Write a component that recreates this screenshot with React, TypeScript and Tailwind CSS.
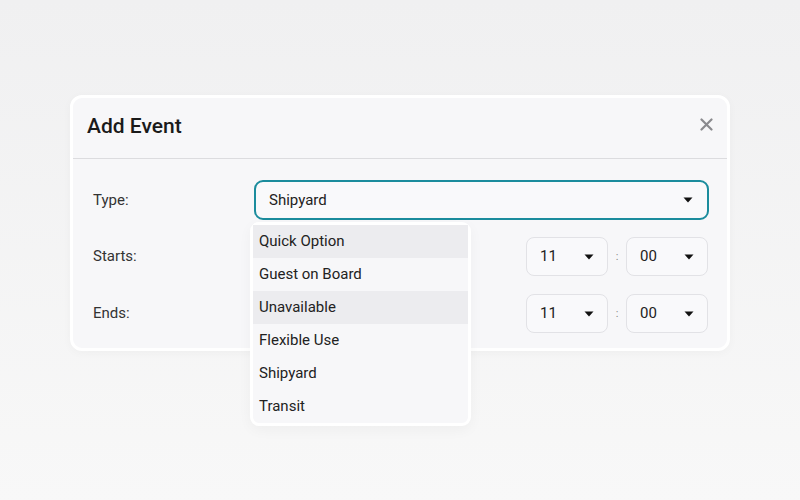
import React from "react";

function Caret() {
  return (
    <svg width="10" height="6" viewBox="0 0 10 6" className="shrink-0">
      <path d="M0.5 0.5 H9.5 L5 5.5 Z" fill="#111" />
    </svg>
  );
}

function TimeSelect({ value }: { value: string }) {
  return (
    <div className="flex h-[39px] w-[82px] items-center justify-between rounded-lg border border-[#e2e2e6] bg-[#f9f9fb] pl-[13px] pr-[13px] text-[15px] text-[#222]">
      <span>{value}</span>
      <Caret />
    </div>
  );
}

function TimeRow() {
  return (
    <div className="flex items-center">
      <TimeSelect value="11" />
      <span className="w-[18px] text-center text-[11px] leading-none text-[#888]">:</span>
      <TimeSelect value="00" />
    </div>
  );
}

const options = [
  { label: "Quick Option", active: true },
  { label: "Guest on Board", active: false },
  { label: "Unavailable", active: true },
  { label: "Flexible Use", active: false },
  { label: "Shipyard", active: false },
  { label: "Transit", active: false },
];

export default function App() {
  return (
    <div
      className="h-[500px] w-[800px] bg-gradient-to-b from-[#f0f0f1] to-[#f8f8f8] pl-[70px] pt-[95px]"
      style={{ fontFamily: "Roboto, 'Noto Sans', sans-serif" }}
    >
      <div className="relative h-[256px] w-[660px] rounded-[12px] border-[3px] border-white bg-[#f7f7f9] shadow-[0_2px_10px_rgba(0,0,0,0.03)]">
        <div className="flex h-[61px] items-center justify-between border-b border-[#dcdcdf] pl-[14px] pr-[14px]">
          <h1 className="pb-[2px] text-[21px] font-medium text-[#1a1a1a]">Add Event</h1>
          <svg width="13" height="13" viewBox="0 0 13 13" className="mb-[7px]">
            <path d="M1.5 1.5 L11.5 11.5 M11.5 1.5 L1.5 11.5" stroke="#8a8a8e" strokeWidth="2.2" strokeLinecap="round" />
          </svg>
        </div>

        <div className="flex flex-col pl-[20px] pr-[19px] pt-[21px]">
          <div className="flex h-[40px] items-center">
            <span className="w-[161px] text-[15px] text-[#333]">Type:</span>
            <div className="mr-[-1px] flex h-[40px] flex-1 items-center justify-between rounded-[9px] border-2 border-[#1b8c9d] bg-[#f9f9fb] pl-[13px] pr-[14px] text-[15px] text-[#222]">
              <span>Shipyard</span>
              <Caret />
            </div>
          </div>

          <div className="mt-[17px] flex h-[39px] items-center justify-between">
            <span className="text-[15px] text-[#333]">Starts:</span>
            <TimeRow />
          </div>

          <div className="mt-[18px] flex h-[39px] items-center justify-between">
            <span className="text-[15px] text-[#333]">Ends:</span>
            <TimeRow />
          </div>
        </div>

        <div className="absolute left-[177px] top-[124px] w-[221px] rounded-[9px] border-[3px] border-white bg-[#f7f7f9] shadow-[0_4px_14px_rgba(0,0,0,0.04)]">
          <ul className="flex flex-col">
            {options.map((o) => (
              <li
                key={o.label}
                className={
                  o.active
                    ? "flex h-[33px] items-center bg-[#ececef] pl-[6px] text-[15px] text-[#222]"
                    : "flex h-[33px] items-center pl-[6px] text-[15px] text-[#222]"
                }
              >
                {o.label}
              </li>
            ))}
          </ul>
        </div>
      </div>
    </div>
  );
}
